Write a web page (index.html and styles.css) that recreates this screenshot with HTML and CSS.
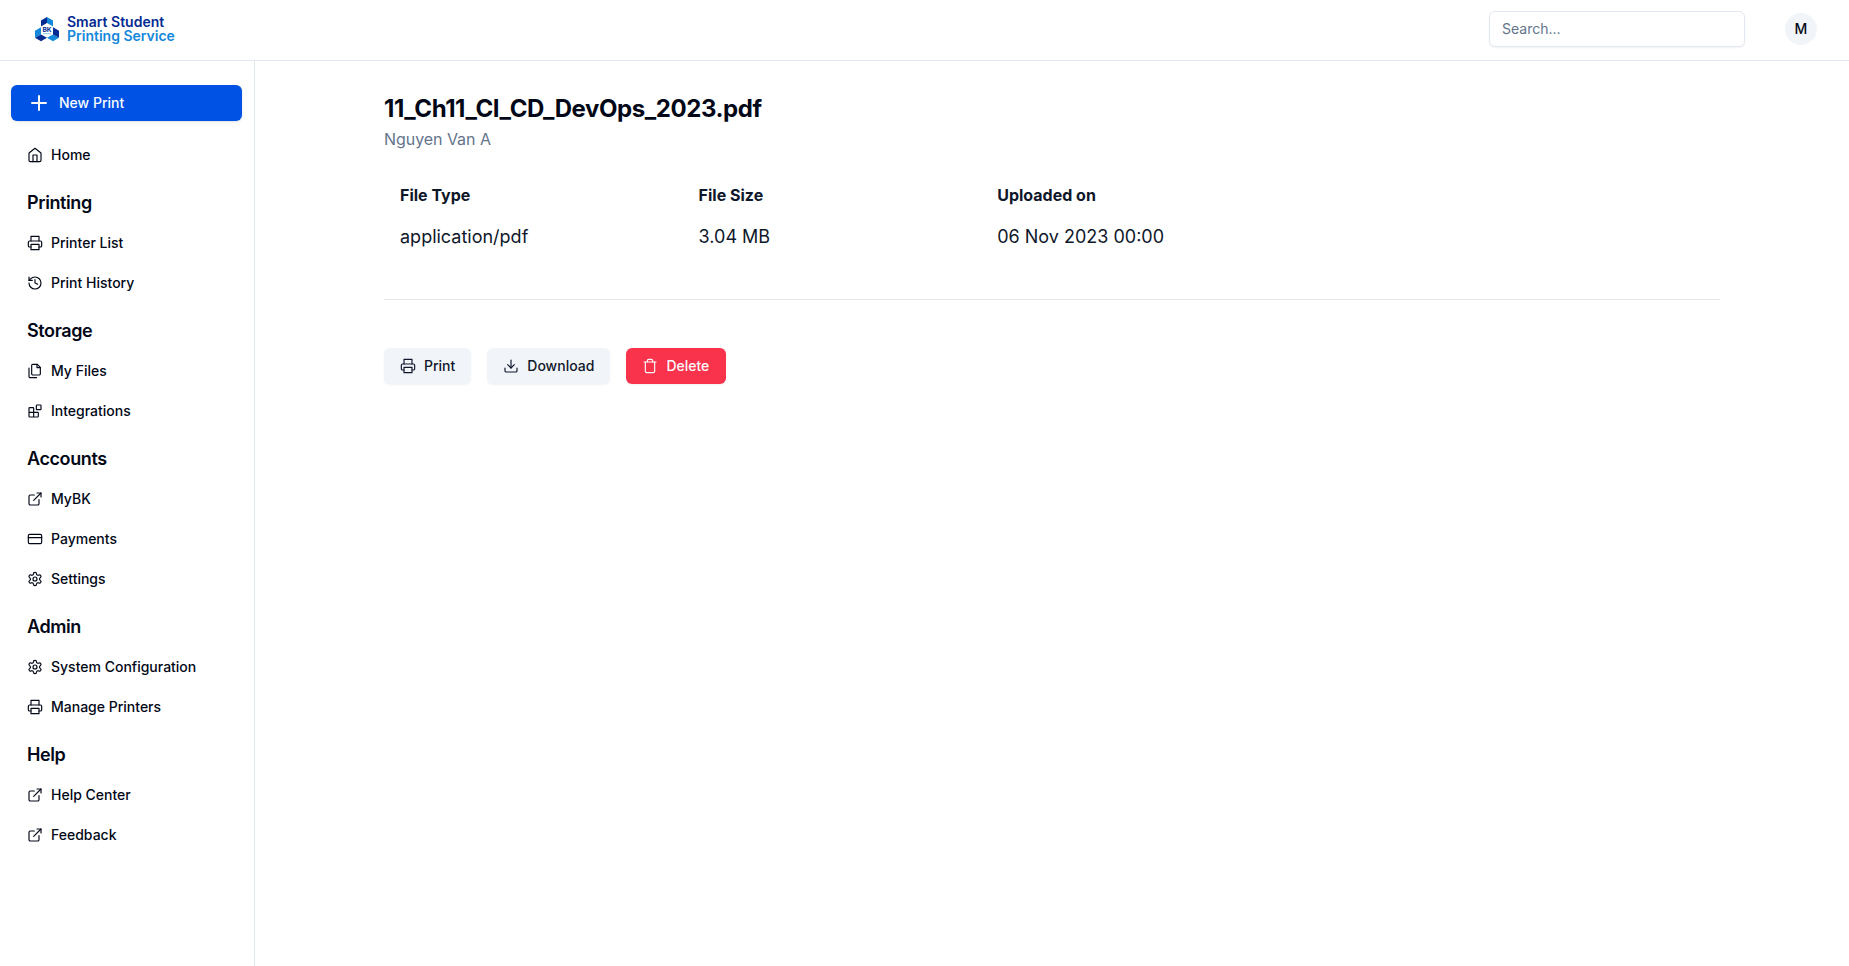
FILE: index.html
```
<!DOCTYPE html>
<html lang="en">
<head>
<meta charset="utf-8">
<title>Smart Student Printing Service</title>
<link rel="stylesheet" href="styles.css">
</head>
<body>
<svg class="sprite" aria-hidden="true">
  <symbol id="plus" viewBox="0 0 24 24"><path d="M5 12h14M12 5v14"/></symbol>
  <symbol id="home" viewBox="0 0 24 24"><path d="m3 9 9-7 9 7v11a2 2 0 0 1-2 2H5a2 2 0 0 1-2-2z"/><path d="M9 22V12h6v10"/></symbol>
  <symbol id="printer" viewBox="0 0 24 24"><path d="M6 9V2h12v7"/><path d="M6 18H4a2 2 0 0 1-2-2v-5a2 2 0 0 1 2-2h16a2 2 0 0 1 2 2v5a2 2 0 0 1-2 2h-2"/><path d="M6 14h12v8H6z"/></symbol>
  <symbol id="history" viewBox="0 0 24 24"><path d="M3 12a9 9 0 1 0 9-9 9.75 9.75 0 0 0-6.74 2.74L3 8"/><path d="M3 3v5h5"/><path d="M12 7v5l4 2"/></symbol>
  <symbol id="files" viewBox="0 0 24 24"><path d="M15.5 2H8.6c-.4 0-.8.2-1.1.5-.3.3-.5.7-.5 1.1v12.8c0 .4.2.8.5 1.1.3.3.7.5 1.1.5h9.8c.4 0 .8-.2 1.1-.5.3-.3.5-.7.5-1.1V6.5L15.5 2z"/><path d="M3 7.6v12.8c0 .4.2.8.5 1.1.3.3.7.5 1.1.5h9.8"/><path d="M15 2v5h5"/></symbol>
  <symbol id="blocks" viewBox="0 0 24 24"><rect width="7" height="7" x="14" y="3" rx="1"/><path d="M10 21V8a1 1 0 0 0-1-1H4a1 1 0 0 0-1 1v12a1 1 0 0 0 1 1h12a1 1 0 0 0 1-1v-5a1 1 0 0 0-1-1H3"/></symbol>
  <symbol id="external" viewBox="0 0 24 24"><path d="M18 13v6a2 2 0 0 1-2 2H5a2 2 0 0 1-2-2V8a2 2 0 0 1 2-2h6"/><path d="M15 3h6v6"/><path d="M10 14 21 3"/></symbol>
  <symbol id="card" viewBox="0 0 24 24"><rect width="20" height="14" x="2" y="5" rx="2"/><path d="M2 10h20"/></symbol>
  <symbol id="settings" viewBox="0 0 24 24"><path d="M12.22 2h-.44a2 2 0 0 0-2 2v.18a2 2 0 0 1-1 1.73l-.43.25a2 2 0 0 1-2 0l-.15-.08a2 2 0 0 0-2.73.73l-.22.38a2 2 0 0 0 .73 2.73l.15.1a2 2 0 0 1 1 1.72v.51a2 2 0 0 1-1 1.74l-.15.09a2 2 0 0 0-.73 2.73l.22.38a2 2 0 0 0 2.73.73l.15-.08a2 2 0 0 1 2 0l.43.25a2 2 0 0 1 1 1.73V20a2 2 0 0 0 2 2h.44a2 2 0 0 0 2-2v-.18a2 2 0 0 1 1-1.73l.43-.25a2 2 0 0 1 2 0l.15.08a2 2 0 0 0 2.73-.73l.22-.39a2 2 0 0 0-.73-2.73l-.15-.08a2 2 0 0 1-1-1.74v-.5a2 2 0 0 1 1-1.74l.15-.09a2 2 0 0 0 .73-2.73l-.22-.38a2 2 0 0 0-2.73-.73l-.15.08a2 2 0 0 1-2 0l-.43-.25a2 2 0 0 1-1-1.73V4a2 2 0 0 0-2-2z"/><circle cx="12" cy="12" r="3"/></symbol>
  <symbol id="download" viewBox="0 0 24 24"><path d="M21 15v4a2 2 0 0 1-2 2H5a2 2 0 0 1-2-2v-4"/><path d="m7 10 5 5 5-5"/><path d="M12 15V3"/></symbol>
  <symbol id="trash" viewBox="0 0 24 24"><path d="M3 6h18"/><path d="M19 6v14c0 1-1 2-2 2H7c-1 0-2-1-2-2V6"/><path d="M8 6V4c0-1 1-2 2-2h4c1 0 2 1 2 2v2"/></symbol>
</svg>

<header class="topbar">
  <a class="brand">
    <svg class="brand-mark" viewBox="0 0 24 24">
      <path fill="#032b91" d="M6 3.4 12 0v6.6L6 10z"/>
      <path fill="#1488db" d="M12 0l6 3.4V10l-6-3.4z"/>
      <path fill="#1488db" d="M0 13.8l6-3.6v7.2l-6 3.4z"/>
      <path fill="#032b91" d="M0 20.8l6-3.4 6 3.4L6 24.2z"/>
      <path fill="#1488db" d="M12 20.8l6-3.4 6 3.4-6 3.4z"/>
      <path fill="#032b91" d="M18 10.2l6 3.6v7l-6-3.4z"/>
      <path fill="#fff" d="M12 6.1l6 3.5v6.9L12 20l-6-3.5V9.6z"/>
      <text class="brand-initials" x="12" y="14.8">BK</text>
      <path stroke="#7cc4ef" stroke-width=".9" d="M8 16.7h8"/>
    </svg>
    <span class="brand-name">Smart Student<br><span class="brand-sub">Printing Service</span></span>
  </a>
  <div class="tools">
    <input class="search" type="text" placeholder="Search...">
    <span class="avatar">M</span>
  </div>
</header>

<div class="layout">
  <nav class="sidebar">
    <a class="new-print"><svg class="icon icon-lg"><use href="#plus"/></svg>New Print</a>
    <section class="group"><a class="item"><svg class="icon"><use href="#home"/></svg>Home</a></section>
    <section class="group">
      <h2>Printing</h2>
      <a class="item"><svg class="icon"><use href="#printer"/></svg>Printer List</a>
      <a class="item"><svg class="icon"><use href="#history"/></svg>Print History</a>
    </section>
    <section class="group">
      <h2>Storage</h2>
      <a class="item"><svg class="icon"><use href="#files"/></svg>My Files</a>
      <a class="item"><svg class="icon"><use href="#blocks"/></svg>Integrations</a>
    </section>
    <section class="group">
      <h2>Accounts</h2>
      <a class="item"><svg class="icon"><use href="#external"/></svg>MyBK</a>
      <a class="item"><svg class="icon"><use href="#card"/></svg>Payments</a>
      <a class="item"><svg class="icon"><use href="#settings"/></svg>Settings</a>
    </section>
    <section class="group">
      <h2>Admin</h2>
      <a class="item"><svg class="icon"><use href="#settings"/></svg>System Configuration</a>
      <a class="item"><svg class="icon"><use href="#printer"/></svg>Manage Printers</a>
    </section>
    <section class="group">
      <h2>Help</h2>
      <a class="item"><svg class="icon"><use href="#external"/></svg>Help Center</a>
      <a class="item"><svg class="icon"><use href="#external"/></svg>Feedback</a>
    </section>
  </nav>

  <main class="content">
    <h1>11_Ch11_CI_CD_DevOps_2023.pdf</h1>
    <p class="owner">Nguyen Van A</p>
    <dl class="details">
      <div><dt>File Type</dt><dd>application/pdf</dd></div>
      <div><dt>File Size</dt><dd>3.04 MB</dd></div>
      <div><dt>Uploaded on</dt><dd>06 Nov 2023 00:00</dd></div>
    </dl>
    <hr>
    <div class="actions">
      <button class="btn"><svg class="icon"><use href="#printer"/></svg>Print</button>
      <button class="btn"><svg class="icon"><use href="#download"/></svg>Download</button>
      <button class="btn btn-danger"><svg class="icon"><use href="#trash"/></svg>Delete</button>
    </div>
  </main>
</div>
</body>
</html>
```

FILE: styles.css
```
*, *::before, *::after { box-sizing: border-box; }
body {
  margin: 0;
  height: 100vh;
  display: flex;
  flex-direction: column;
  overflow: hidden;
  background: #fff;
  color: #020817;
  font-family: Inter, sans-serif;
  font-size: 14px;
  line-height: 20px;
}
h1, h2, p, dl, dd, hr { margin: 0; }
.sprite { display: none; }
.icon {
  width: 16px;
  height: 16px;
  flex: none;
  fill: none;
  stroke: currentColor;
  stroke-width: 1.75;
  stroke-linecap: round;
  stroke-linejoin: round;
}
.icon-lg { width: 24px; height: 24px; stroke-width: 2; }

.topbar {
  height: 61px;
  flex: none;
  display: flex;
  align-items: center;
  justify-content: space-between;
  padding: 0 32px 2px 35px;
  border-bottom: 1px solid #e2e8f0;
}
.brand { display: flex; align-items: center; gap: 8px; }
.brand-mark { width: 24px; height: 24px; overflow: visible; }
.brand-initials { font: 700 6.6px Inter, sans-serif; fill: #032b91; text-anchor: middle; }
.brand-name { font-weight: 600; line-height: 14px; color: #032b91; }
.brand-sub { color: #1488db; }
.tools { display: flex; align-items: center; gap: 40px; }
.search {
  width: 256px;
  height: 36px;
  padding: 3px 12px 5px;
  border: 1px solid #e2e8f0;
  border-radius: 6px;
  box-shadow: 0 1px 2px rgba(0, 0, 0, .05);
  font: 14px/20px Inter, sans-serif;
}
.search::placeholder { color: #64748b; opacity: 1; }
.avatar {
  width: 32px;
  height: 32px;
  display: grid;
  place-items: center;
  border-radius: 50%;
  background: #f1f5f9;
  font-weight: 500;
}

.layout { flex: 1; display: flex; min-height: 0; }
.sidebar {
  width: 255px;
  flex: none;
  padding: 24px 12px 0 11px;
  border-right: 1px solid #e2e8f0;
}
.new-print, .item {
  display: flex;
  align-items: center;
  gap: 8px;
  height: 36px;
  padding: 0 16px;
  font-weight: 500;
}
.new-print {
  border-radius: 6px;
  background: #0052e4;
  color: #f8fafc;
  box-shadow: 0 1px 3px rgba(0, 0, 0, .1), 0 1px 2px -1px rgba(0, 0, 0, .1);
}
.group { margin-top: 16px; }
.group h2 {
  margin-bottom: 8px;
  padding: 0 16px;
  font-size: 18px;
  font-weight: 600;
  line-height: 28px;
  letter-spacing: -.4px;
}
.item + .item { margin-top: 4px; }

.content { flex: 1; padding: 32px 129px 0; }
h1 { font-size: 24px; line-height: 32px; font-weight: 700; letter-spacing: -.43px; }
.owner { margin-top: 2px; font-size: 16px; line-height: 24px; letter-spacing: -.05px; color: #64748b; }
.details {
  display: grid;
  grid-template-columns: repeat(3, 298.6px);
  padding: 32px 16px 48px;
}
.details dt { font-size: 16px; font-weight: 700; line-height: 24px; }
.details dd { margin-top: 16px; font-size: 18px; line-height: 28px; }
.details { color: #0f172a; }
hr { border: 0; height: 1px; background: #e5e7eb; }
.actions { display: flex; gap: 16px; margin-top: 48px; }
.btn {
  display: flex;
  align-items: center;
  gap: 8px;
  height: 36px;
  padding: 0 16px;
  border: 0;
  border-radius: 6px;
  background: #f1f5f9;
  color: #0f172a;
  font: 500 14px/20px Inter, sans-serif;
  box-shadow: 0 1px 2px rgba(0, 0, 0, .05);
}
.btn-danger { min-width: 100px; background: #f8334b; color: #f8fafc; }
```
